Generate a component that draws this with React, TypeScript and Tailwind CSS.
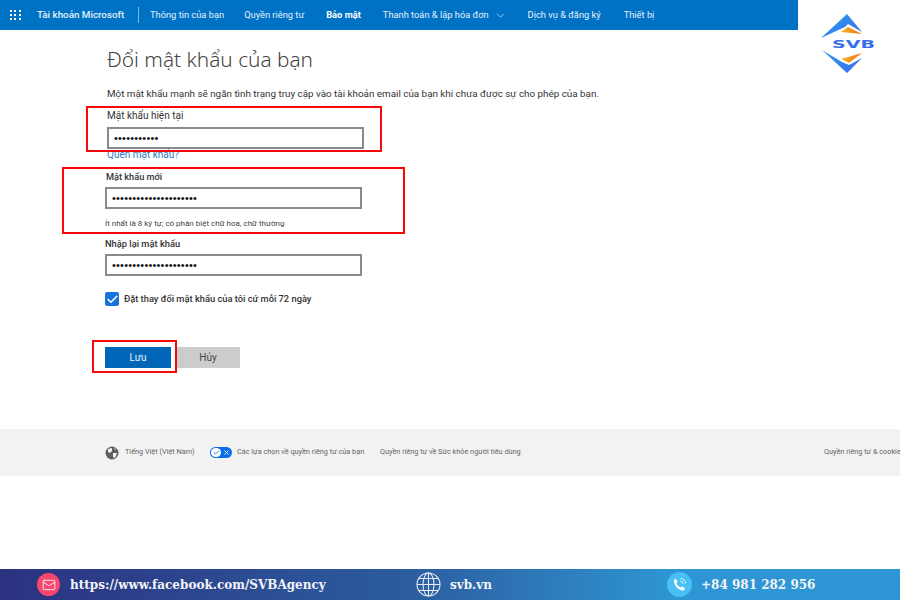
import React from "react";
import { ChevronDown, Check, X, Mail } from "lucide-react";

const font = { fontFamily: 'Roboto, "Noto Sans", sans-serif' };

const navItems = [
  { label: "Thông tin của bạn", className: "" },
  { label: "Quyền riêng tư", className: "" },
  { label: "Bảo mật", className: "ml-[2px] font-bold text-white" },
  { label: "Thanh toán & lập hóa đơn", className: "ml-[2px] mr-[1px]" },
  { label: "Dịch vụ & đăng ký", className: "" },
  { label: "Thiết bị", className: "ml-[3px]" },
];

const Logo = () => (
  <svg width="60" height="62" viewBox="0 0 60 62">
    <defs>
      <linearGradient id="blue" x1="0" y1="0" x2="1" y2="1">
        <stop offset="0" stopColor="#2aa0f2" />
        <stop offset="1" stopColor="#3d6ae6" />
      </linearGradient>
      <linearGradient id="orange" x1="0" y1="0" x2="1" y2="0">
        <stop offset="0" stopColor="#f8b81e" />
        <stop offset="1" stopColor="#f0701f" />
      </linearGradient>
    </defs>
    <path d="M29 1 L44 19 L30 11 L27 14 L3 25 Z" fill="url(#blue)" />
    <path d="M4 37 L24 49 L31 52 L44 45 L29 60 Z" fill="url(#blue)" />
    <path d="M23 19 L30 14 L44 21 Z" fill="url(#orange)" />
    <path d="M23 46 L44 40 L31 50 Z" fill="url(#orange)" />
    <text x="14" y="35" fontSize="11" fontWeight="700" fill="#3a6ee8" textLength="43" lengthAdjust="spacingAndGlyphs" style={{ fontFamily: '"DejaVu Sans", sans-serif' }}>
      SVB
    </text>
  </svg>
);

const PasswordField = ({ dots, className }: { dots: number; className: string }) => (
  <div className={`flex h-[22px] w-[257px] items-center border-2 border-[#8a8a8a] bg-white pl-[5px] ${className}`}>
    <span className="text-[11px] leading-none tracking-[0.2px] text-[#111]" style={{ fontFamily: '"Liberation Sans", sans-serif' }}>
      {"•".repeat(dots)}
    </span>
  </div>
);

const App = () => {
  return (
    <div className="relative flex h-[600px] w-[900px] flex-col overflow-hidden bg-white text-[#333]" style={font}>
      <header className="flex h-[30px] w-[798px] shrink-0 items-center bg-[#0072c6] text-[9.3px] text-[#e6f1fa]">
        <div className="ml-[10px] grid w-[11px] grid-cols-3 gap-[2px]">
          {Array.from({ length: 9 }).map((_, i) => (
            <span key={i} className="h-[2px] w-[2px] bg-white" />
          ))}
        </div>
        <span className="ml-[16px] w-[88px] whitespace-nowrap text-[9.8px] font-medium">Tài khoản Microsoft</span>
        <span className="ml-[13px] h-[16px] w-px bg-[#7fb5e0]" />
        <nav className="ml-[11px] flex items-center gap-[20px]">
          {navItems.map((item) => (
            <span key={item.label} className={`flex items-center gap-[5px] ${item.className}`}>
              {item.label}
              {item.label.startsWith("Thanh") && <ChevronDown size={13} strokeWidth={1.2} />}
            </span>
          ))}
        </nav>
      </header>

      <main className="flex h-[399px] shrink-0 flex-col pl-[105px]">
        <h1 className="ml-[2px] mt-[15px] h-[28px] text-[20.8px] font-light leading-[28px] text-[#444]" style={{ fontFamily: '"Noto Sans", sans-serif' }}>
          Đổi mật khẩu của bạn
        </h1>
        <p className="ml-[2px] mt-[14px] text-[9.86px] leading-[14px] text-[#333]">
          Một mật khẩu mạnh sẽ ngăn tình trạng truy cập vào tài khoản email của bạn khi chưa được sự cho phép của bạn.
        </p>
        <label className="ml-[2px] mt-[8px] text-[10px] leading-[14px]">Mật khẩu hiện tại</label>
        <PasswordField dots={11} className="ml-[2px] mt-[4px]" />
        <a className="ml-[2px] -mt-[1px] text-[10px] leading-[14px] text-[#2b7cc4]">Quên mật khẩu?</a>
        <label className="ml-[1px] mt-[8px] text-[9.2px] font-medium leading-[14px] text-[#333]">Mật khẩu mới</label>
        <PasswordField dots={21} className="mt-[3px]" />
        <p className="mt-[8px] text-[8px] leading-[14px] text-[#444]">Ít nhất là 8 ký tự; có phân biệt chữ hoa, chữ thường</p>
        <label className="mt-[6px] text-[9.3px] font-medium leading-[14px]">Nhập lại mật khẩu</label>
        <PasswordField dots={21} className="mt-[3px]" />
        <div className="mt-[16px] flex items-center gap-[5px]">
          <span className="flex h-[14px] w-[14px] items-center justify-center rounded-[2px] bg-[#1a73d8]">
            <Check size={13} strokeWidth={3} className="text-white" />
          </span>
          <span className="text-[9.3px] font-medium leading-[14px]">Đặt thay đổi mật khẩu của tôi cứ mỗi 72 ngày</span>
        </div>
        <div className="mt-[41px] flex">
          <button className="h-[21px] w-[66px] bg-[#0067b8] text-[10px] text-[#e6f1fa]">Lưu</button>
          <button className="ml-[5px] h-[21px] w-[64px] bg-[#cccccc] text-[10px] text-[#444]">Hủy</button>
        </div>
      </main>

      <footer className="flex h-[47px] shrink-0 items-center whitespace-nowrap bg-[#f2f2f2] pl-[105px] text-[7.3px] text-[#666]">
        <svg width="14" height="14" viewBox="0 0 14 14" className="shrink-0">
          <circle cx="7" cy="7" r="6.5" fill="#5f5f5f" />
          <path d="M3 3 L7 2 L7 5 L5 7 L3 6 Z M8 7 L12 7 L10 12 L8 11 Z M9 2 L11 3 L10 4 Z" fill="#f2f2f2" />
        </svg>
        <span className="ml-[6px] w-[70px] shrink-0">Tiếng Việt (Việt Nam)</span>
        <span className="ml-[15px] flex h-[11px] w-[22px] shrink-0 items-center justify-between rounded-full bg-[#0a6ee6] px-[1px]">
          <span className="flex h-[9px] w-[10px] items-center justify-center rounded-full bg-white">
            <Check size={7} strokeWidth={3} className="text-[#0a6ee6]" />
          </span>
          <X size={7} strokeWidth={3} className="mr-[1px] text-white" />
        </span>
        <span className="ml-[5px] w-[127px] shrink-0">Các lựa chọn về quyền riêng tư của bạn</span>
        <span className="ml-[16px] w-[141px] shrink-0">Quyền riêng tư về Sức khỏe người tiêu dùng</span>
        <span className="ml-[303px] shrink-0">Quyền riêng tư & cookie</span>
      </footer>

      <div className="flex-1" />

      <div
        className="flex h-[31px] shrink-0 items-center bg-gradient-to-r from-[#2b327f] via-[#2b5c9e] via-45% to-[#2e96d4] to-75% text-[12px] font-bold text-[#f2f4f8]"
        style={{ fontFamily: '"DejaVu Serif", serif' }}
      >
        <span className="ml-[37px] flex h-[23px] w-[23px] items-center justify-center rounded-full bg-[#f7476f]">
          <Mail size={14} strokeWidth={1.5} className="text-white" />
        </span>
        <span className="ml-[10px] w-[346px]">https://www.facebook.com/SVBAgency</span>
        <svg width="25" height="25" viewBox="0 0 25 25" fill="none" stroke="#e8edf5" strokeWidth="1.1">
          <circle cx="12.5" cy="12.5" r="11.5" />
          <ellipse cx="12.5" cy="12.5" rx="5.5" ry="11.5" />
          <path d="M12.5 1V24M1 12.5H24M2.8 6.5H22.2M2.8 18.5H22.2" />
        </svg>
        <span className="ml-[9px] w-[217px]">svb.vn</span>
        <span className="flex h-[25px] w-[25px] items-center justify-center rounded-full bg-[#48c0f5]">
          <svg width="17" height="17" viewBox="0 0 24 24" fill="none" stroke="white">
            <path d="M6.6 3.5 9.5 8.4 7.6 10.4c.9 2.4 3.2 4.900 5.900 6l2-1.900 4.500 2.900-1.900 3.100c-6.500 1-14.600-7.500-14-14.500Z" fill="white" stroke="none" />
            <path d="M13 7a4 4 0 0 1 4 4M13.500 3.500a7.500 7.500 0 0 1 7 7" strokeWidth="1.2" />
          </svg>
        </span>
        <span className="ml-[9px]">+84 981 282 956</span>
      </div>

      {/* red annotation boxes */}
      <div className="absolute left-[86px] top-[106px] h-[46px] w-[296px] border-2 border-[#f50a0a]" />
      <div className="absolute left-[62px] top-[167px] h-[67px] w-[343px] border-2 border-[#f50a0a]" />
      <div className="absolute left-[92px] top-[340px] h-[33px] w-[85px] border-2 border-[#f50a0a]" />

      <div className="absolute left-[818px] top-[13px]">
        <Logo />
      </div>
    </div>
  );
};

export default App;
